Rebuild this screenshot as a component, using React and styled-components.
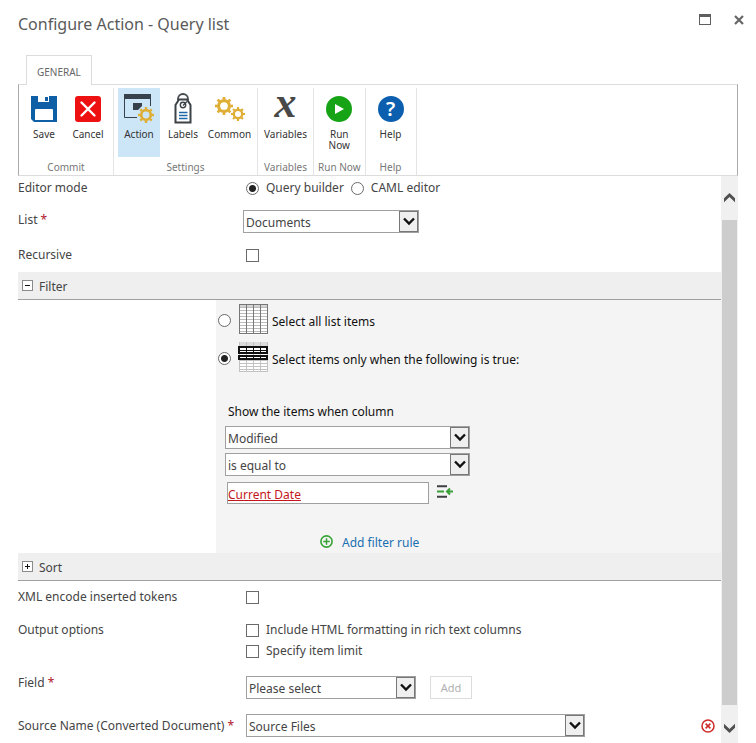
import React, { useState } from "react";
import styled, { createGlobalStyle } from "styled-components";

const App = () => {
    const [mode, setMode] = useState("builder");
    const [selection, setSelection] = useState("rule");
    const [value, setValue] = useState("Current Date");
    const [filterOpen, setFilterOpen] = useState(true);

    return (
        <>
            <GlobalStyle />
            <Dialog>
                <Header>
                    <h1>Configure Action - Query list</h1>
                    <WindowButtons>
                        <IconButton aria-label="Maximize">
                            <svg width="12" height="11" viewBox="0 0 12 11">
                                <rect x="0.5" y="0.5" width="11" height="10" fill="#fff" stroke="#5e5e5e" />
                                <rect width="12" height="3" fill="#5e5e5e" />
                            </svg>
                        </IconButton>
                        <IconButton aria-label="Close">
                            <svg width="10" height="10" viewBox="0 0 10 10">
                                <path d="M1 1L9 9M9 1L1 9" stroke="#666" strokeWidth="2.2" />
                            </svg>
                        </IconButton>
                    </WindowButtons>
                </Header>
                <Tabs>
                    <Tab>GENERAL</Tab>
                </Tabs>
                <Ribbon>
                    <Group>
                        <Tools>
                            <Tool><SaveIcon />Save</Tool>
                            <Tool><CancelIcon />Cancel</Tool>
                        </Tools>
                        <GroupName>Commit</GroupName>
                    </Group>
                    <Group>
                        <Tools>
                            <Tool $active><ActionIcon />Action</Tool>
                            <Tool><LabelsIcon />Labels</Tool>
                            <Tool $wide><CommonIcon />Common</Tool>
                        </Tools>
                        <GroupName>Settings</GroupName>
                    </Group>
                    <Group>
                        <Tools>
                            <Tool $wide><VariableMark aria-hidden="true">x</VariableMark>Variables</Tool>
                        </Tools>
                        <GroupName>Variables</GroupName>
                    </Group>
                    <Group>
                        <Tools>
                            <Tool><RunIcon /><span>Run<br />Now</span></Tool>
                        </Tools>
                        <GroupName>Run Now</GroupName>
                    </Group>
                    <Group>
                        <Tools>
                            <Tool><HelpMark aria-hidden="true">?</HelpMark>Help</Tool>
                        </Tools>
                        <GroupName>Help</GroupName>
                    </Group>
                </Ribbon>
                <Body>
                    <Form onSubmit={(e) => e.preventDefault()}>
                        <Row $top="2px" $height="30px">
                            <Label as="span">Editor mode</Label>
                            <Controls $indent>
                                <Choice>
                                    <Radio name="mode" checked={mode === "builder"} onChange={() => setMode("builder")} />
                                    Query builder
                                </Choice>
                                <Choice>
                                    <Radio name="mode" checked={mode === "caml"} onChange={() => setMode("caml")} />
                                    CAML editor
                                </Choice>
                            </Controls>
                        </Row>
                        <Row $top="4px" $height="34px">
                            <Label htmlFor="list">List <Required>*</Required></Label>
                            <Controls>
                                <Dropdown id="list" width="176px" options={["Documents"]} />
                            </Controls>
                        </Row>
                        <Row $top="5px" $height="32px">
                            <Label htmlFor="recursive">Recursive</Label>
                            <Controls $indent>
                                <Choice as="span"><Checkbox id="recursive" /></Choice>
                            </Controls>
                        </Row>

                        <SectionBar>
                            <Toggle type="button" aria-label="Toggle filter" onClick={() => setFilterOpen(!filterOpen)}>
                                <ToggleSign plus={!filterOpen} />
                            </Toggle>
                            <h2>Filter</h2>
                        </SectionBar>
                        {filterOpen && (
                            <FilterPanel>
                                <FilterOption>
                                    <Radio name="selection" checked={selection === "all"} onChange={() => setSelection("all")} />
                                    <AllItemsIcon />
                                    <span>Select all list items</span>
                                </FilterOption>
                                <FilterOption>
                                    <Radio name="selection" checked={selection === "rule"} onChange={() => setSelection("rule")} />
                                    <SomeItemsIcon />
                                    <span>Select items only when the following is true:</span>
                                </FilterOption>
                                <Rule>
                                    <RuleLabel htmlFor="column">Show the items when column</RuleLabel>
                                    <Dropdown id="column" width="245px" options={["Modified"]} />
                                    <Dropdown aria-label="Operator" width="245px" options={["is equal to"]} />
                                    <ValueRow>
                                        <ValueInput aria-label="Value" value={value} onChange={(e) => setValue(e.target.value)} />
                                        <IconButton type="button" aria-label="Insert reference">
                                            <svg width="17" height="13" viewBox="0 0 17 13">
                                                <path d="M0 1.2H10M0 11.8H10" stroke="#3c4043" strokeWidth="2" />
                                                <path d="M0 6.5H7M10 6.5H16M13 3.5L10 6.5L13 9.5" stroke="#3a9f3a" strokeWidth="2" fill="none" />
                                            </svg>
                                        </IconButton>
                                    </ValueRow>
                                </Rule>
                                <AddRule href="#add-rule">
                                    <svg width="13" height="13" viewBox="0 0 13 13">
                                        <circle cx="6.5" cy="6.5" r="5.6" fill="none" stroke="#35a335" strokeWidth="1.6" />
                                        <path d="M6.5 3.2V9.8M3.2 6.5H9.8" stroke="#35a335" strokeWidth="1.5" />
                                    </svg>
                                    <span>Add filter rule</span>
                                </AddRule>
                            </FilterPanel>
                        )}
                        <SectionBar>
                            <Toggle type="button" aria-label="Toggle sort">
                                <ToggleSign plus />
                            </Toggle>
                            <h2>Sort</h2>
                        </SectionBar>

                        <Row $top="6px" $height="33px">
                            <Label htmlFor="xml">XML encode inserted tokens</Label>
                            <Controls $indent>
                                <Choice as="span"><Checkbox id="xml" /></Choice>
                            </Controls>
                        </Row>
                        <Row $top="6px" $height="53px">
                            <Label as="span">Output options</Label>
                            <Controls $indent $column>
                                <Choice><Checkbox />Include HTML formatting in rich text columns</Choice>
                                <Choice><Checkbox />Specify item limit</Choice>
                            </Controls>
                        </Row>
                        <Row $top="6px" $height="38px">
                            <Label htmlFor="field">Field <Required>*</Required></Label>
                            <Controls $indent $low>
                                <Dropdown id="field" width="170px" options={["Please select"]} />
                                <AddButton type="button" disabled>Add</AddButton>
                            </Controls>
                        </Row>
                        <Row $top="9px" $height="32px" $center>
                            <Label htmlFor="source">Source Name (Converted Document) <Required>*</Required></Label>
                            <Controls $indent>
                                <Dropdown id="source" width="339px" options={["Source Files"]} />
                                <RemoveButton type="button" aria-label="Remove">
                                    <svg width="14" height="14" viewBox="0 0 14 14">
                                        <circle cx="7" cy="7" r="6" fill="none" stroke="#cf2a2a" strokeWidth="1.5" />
                                        <path d="M4.6 4.6L9.4 9.4M9.4 4.6L4.6 9.4" stroke="#cf2a2a" strokeWidth="1.5" />
                                    </svg>
                                </RemoveButton>
                            </Controls>
                        </Row>
                    </Form>
                    <Scrollbar>
                        <ScrollButton aria-label="Scroll up" $height="44px">
                            <svg width="11" height="10" viewBox="0 0 11 10">
                                <path d="M0 5.2L5.5 0L11 5.2V9.2L5.5 4L0 9.2Z" fill="#505050" />
                            </svg>
                        </ScrollButton>
                        <Thumb />
                        <ScrollButton aria-label="Scroll down" $height="38px" $low>
                            <svg width="11" height="10" viewBox="0 0 11 10">
                                <path d="M0 4.8L5.5 10L11 4.8V0.8L5.5 6L0 0.8Z" fill="#505050" />
                            </svg>
                        </ScrollButton>
                    </Scrollbar>
                </Body>
            </Dialog>
        </>
    );
};

const Radio = (props) => <RadioInput type="radio" {...props} />;
const Checkbox = (props) => <CheckInput type="checkbox" {...props} />;

const Dropdown = ({ width, options, ...rest }) => (
    <SelectWrap $width={width}>
        <Select {...rest}>
            {options.map((option) => (
                <option key={option}>{option}</option>
            ))}
        </Select>
        <SelectArrow>
            <svg width="12" height="9" viewBox="0 0 12 9">
                <path d="M1 1.5L6 6.5L11 1.5" fill="none" stroke="#111" strokeWidth="2.4" />
            </svg>
        </SelectArrow>
    </SelectWrap>
);

const ToggleSign = ({ plus }) => (
    <svg width="11" height="11" viewBox="0 0 11 11">
        <rect x="0.5" y="0.5" width="10" height="10" fill="#fff" stroke="#8a8a8a" />
        <path d={plus ? "M3 5.5H8M5.5 3V8" : "M3 5.5H8"} stroke="#111" />
    </svg>
);

const Gear = ({ cx, cy, r }) => (
    <g transform={`translate(${cx} ${cy})`} fill="none" stroke="#dfae35">
        <circle r={r * 0.6} strokeWidth={r * 0.34} />
        {[0, 45, 90, 135, 180, 225, 270, 315].map((angle) => (
            <path key={angle} d={`M0 ${-r * 0.7}V${-r}`} strokeWidth={r * 0.3} transform={`rotate(${angle})`} />
        ))}
    </g>
);

const SaveIcon = () => (
    <svg width="32" height="32" viewBox="0 -1 32 32">
        <path d="M3 2H29V28H6L3 25Z" fill="#0f5fa6" />
        <path d="M10 2H21V8H10ZM8 15H24Q25 15 25 16V26H7V16Q7 15 8 15Z" fill="#fff" />
        <rect x="17" y="3" width="3" height="4" fill="#0f5fa6" />
    </svg>
);

const CancelIcon = () => (
    <svg width="32" height="32" viewBox="0 -1 32 32">
        <rect x="3" y="2" width="26" height="26" rx="3" fill="#ee1111" />
        <path d="M9.5 8.5L22.5 21.5M22.5 8.5L9.5 21.5" stroke="#fff" strokeWidth="2.4" strokeLinecap="round" />
    </svg>
);

const ActionIcon = () => (
    <svg width="32" height="32" viewBox="0 0 32 32">
        <path d="M1.5 2V24.5H14M27.5 2V13" fill="none" stroke="#36414b" />
        <rect x="1" y="1" width="27" height="5" fill="#36414b" />
        <path d="M10 10H19V13L15 17H10Z" fill="#36414b" />
        <Gear cx={23} cy={22} r={8} />
    </svg>
);

const LabelsIcon = () => (
    <svg width="32" height="32" viewBox="0 0 32 32">
        <path d="M11 7.5V6A5 5 0 0 1 21 6V7.5" fill="none" stroke="#454a4e" strokeWidth="1.8" />
        <path d="M8.5 12L12 6.5H20L23.5 12V29.5H8.5Z" fill="#fff" stroke="#3d4246" strokeWidth="2" />
        <circle cx="16" cy="12" r="2.7" fill="none" stroke="#3d4246" strokeWidth="1.4" />
        <path d="M16 12.5L20 8.5" stroke="#3d4246" strokeWidth="1.2" />
        <path d="M12 19.5H20.5M12 22.5H20.5M12 25.5H20.5" stroke="#1c67a5" strokeWidth="1.3" />
    </svg>
);

const CommonIcon = () => (
    <svg width="32" height="32" viewBox="0 0 32 32">
        <Gear cx={10} cy={13} r={9} />
        <Gear cx={24} cy={21} r={7} />
    </svg>
);

const RunIcon = () => (
    <svg width="32" height="32" viewBox="0 0 32 32">
        <circle cx="16" cy="16" r="13" fill="#16a416" />
        <path d="M12 11L21 16L12 21Z" fill="#fff" />
    </svg>
);

const AllItemsIcon = () => (
    <svg width="30" height="32" viewBox="0 0 30 32">
        <rect x="1.5" y="1.5" width="28" height="30" fill="#fff" />
        <rect x="1" y="1" width="29" height="3" fill="#d4d4d4" />
        <path d="M1 4.5H30M1 7.5H30M1 10.5H30M1 13.5H30M1 16.5H30M1 19.5H30M1 22.5H30M1 25.5H30M1 28.5H30" stroke="#bbb" />
        <path d="M8.5 1V31M15.5 1V31M22.5 1V31" stroke="#777" />
        <rect x="1.5" y="1.5" width="28" height="29" fill="none" stroke="#777" />
    </svg>
);

const SomeItemsIcon = () => (
    <svg width="30" height="32" viewBox="0 0 30 32">
        <rect x="1" y="1" width="29" height="30" fill="#fff" />
        <rect x="1" y="1" width="29" height="4" fill="#dcdcdc" />
        <path d="M1 19.5H30M1 22.5H30M1 25.5H30M1 28.5H30M1 30.5H30M1.5 1V31M8.5 1V31M15.5 1V31M22.5 1V31M29.5 1V31" stroke="#c2c2c2" />
        <path d="M1 6H29V12H1ZM1 15H29V18H1Z" fill="#fff" stroke="#111" strokeWidth="2" />
        <path d="M1 9.5H29M8.5 6V12M15.5 6V12M22.5 6V12M8.5 15V18M15.5 15V18M22.5 15V18" stroke="#111" />
    </svg>
);

const GlobalStyle = createGlobalStyle`
    * {
        box-sizing: border-box;
    }
    body {
        margin: 0;
        background: #fff;
        color: #444;
        font-family: "Noto Sans", "Open Sans", sans-serif;
        font-size: 12px;
        line-height: 18px;
    }
    button, input, select {
        font: inherit;
        color: inherit;
    }
`;

const Dialog = styled.main`
    padding: 0 18px;
`;

const Header = styled.header`
    display: flex;
    justify-content: space-between;
    align-items: flex-start;
    height: 55px;
    padding-top: 12px;
    margin-right: -6px;
    h1 {
        margin: 0;
        font-size: 16px;
        line-height: 24px;
        font-weight: 400;
        color: #5a5a5a;
    }
`;

const WindowButtons = styled.div`
    display: flex;
    align-items: center;
    gap: 23px;
    height: 15px;
`;

const IconButton = styled.button`
    display: flex;
    padding: 0;
    border: 0;
    background: none;
    cursor: pointer;
`;

const Tabs = styled.nav`
    display: flex;
    padding-left: 8px;
`;

const Tab = styled.button`
    height: 30px;
    margin-bottom: -1px;
    padding: 2px 10px 0;
    border: 1px solid #dcdcdc;
    border-bottom: 0;
    background: #fff;
    color: #666;
    font-size: 10px;
    z-index: 1;
`;

const Ribbon = styled.section`
    display: flex;
    height: 92px;
    padding-top: 3px;
    border: 1px solid #dcdcdc;
    border-left-color: #aaa;
    border-right-color: #aaa;
`;

const Group = styled.div`
    display: flex;
    flex-direction: column;
    justify-content: space-between;
    padding: 0 4px;
    border-right: 1px solid #e4e4e4;
`;

const Tools = styled.div`
    display: flex;
    justify-content: center;
    gap: 2px;
`;

const Tool = styled.button`
    display: flex;
    flex-direction: column;
    align-items: center;
    width: ${(props) => (props.$wide ? "47px" : "42px")};
    height: 69px;
    padding: 5px 0 0;
    border: 0;
    background: ${(props) => (props.$active ? "#cde6f7" : "none")};
    color: #333;
    font-size: 10px;
    line-height: 11px;
    cursor: pointer;
    svg {
        flex: none;
        margin-bottom: 4px;
    }
`;

const GroupName = styled.div`
    color: #777;
    font-size: 10px;
    line-height: 16px;
    text-align: center;
    white-space: nowrap;
`;

const VariableMark = styled.span`
    height: 32px;
    margin-bottom: 4px;
    color: #484848;
    font-family: "Liberation Serif", serif;
    font-size: 44px;
    font-style: italic;
    font-weight: 700;
    line-height: 20px;
`;

const HelpMark = styled.span`
    width: 26px;
    height: 26px;
    margin: 3px 0 7px;
    border-radius: 50%;
    background: #0c5fae;
    color: #fff;
    font-size: 20px;
    font-weight: 600;
    line-height: 26px;
`;

const Body = styled.div`
    display: flex;
`;

const Form = styled.form`
    flex: 1;
    min-width: 0;
    padding-bottom: 6px;
`;

const Row = styled.div`
    display: grid;
    grid-template-columns: 225px 1fr;
    align-items: ${(props) => (props.$center ? "center" : "start")};
    min-height: ${(props) => props.$height};
    padding-top: ${(props) => props.$top};
`;

const Label = styled.label`
    padding-top: 1px;
    white-space: nowrap;
`;

const Required = styled.span`
    color: #b0182c;
`;

const Controls = styled.div`
    display: flex;
    flex-direction: ${(props) => (props.$column ? "column" : "row")};
    align-items: ${(props) => (props.$column ? "flex-start" : "center")};
    gap: ${(props) => (props.$column ? "1px" : "7px")};
    padding-left: ${(props) => (props.$indent ? "3px" : "0")};
    padding-top: ${(props) => (props.$low ? "3px" : "0")};
`;

const Choice = styled.label`
    display: flex;
    align-items: center;
    gap: 7px;
    height: 20px;
`;

const RadioInput = styled.input`
    appearance: none;
    flex: none;
    width: 13px;
    height: 13px;
    margin: 0;
    border: 1px solid #6a6a6a;
    border-radius: 50%;
    background: #fff;
    &:checked {
        background: radial-gradient(circle, #222 3px, #fff 4px);
    }
`;

const CheckInput = styled.input`
    appearance: none;
    flex: none;
    width: 13px;
    height: 13px;
    margin: 0;
    border: 1px solid #6a6a6a;
    background: #fff;
    &:checked {
        background: #444;
        box-shadow: inset 0 0 0 2px #fff;
    }
`;

const SelectWrap = styled.div`
    position: relative;
    width: ${(props) => props.$width};
    height: 23px;
`;

const Select = styled.select`
    appearance: none;
    display: block;
    width: 100%;
    height: 100%;
    padding: 2px 20px 0 2px;
    border: 1px solid #a0a0a0;
    border-radius: 0;
    background: #fff;
`;

const SelectArrow = styled.span`
    position: absolute;
    top: 1px;
    right: 1px;
    bottom: 1px;
    display: flex;
    align-items: center;
    justify-content: center;
    width: 19px;
    border: 1px solid #777;
    background: #efefef;
    pointer-events: none;
`;

const SectionBar = styled.div`
    display: flex;
    align-items: center;
    gap: 6px;
    height: 28px;
    padding-left: 4px;
    border-bottom: 1px solid #a0a0a0;
    background: #efefef;
    h2 {
        margin: 0;
        padding-top: 2px;
        font-size: 12px;
        font-weight: 400;
    }
`;

const Toggle = styled(IconButton)``;

const FilterPanel = styled.div`
    display: flex;
    flex-direction: column;
    align-items: flex-start;
    min-height: 253px;
    margin-left: 198px;
    padding: 3px 2px 0;
    background: #f4f4f4;
    color: #111;
`;

const FilterOption = styled.label`
    display: flex;
    align-items: center;
    height: 32px;
    margin-bottom: 6px;
    input {
        margin-top: 3px;
    }
    svg {
        margin: 0 4px 0 7px;
    }
    span {
        padding-top: 6px;
    }
`;

const Rule = styled.div`
    display: flex;
    flex-direction: column;
    gap: 4px;
    padding: 24px 0 0 7px;
    color: #444;
`;

const RuleLabel = styled.label`
    padding: 0 0 1px 3px;
    color: #111;
`;

const ValueRow = styled.div`
    display: flex;
    gap: 8px;
    padding: 2px 0 0 2px;
    button {
        padding-top: 3px;
        align-self: flex-start;
    }
`;

const ValueInput = styled.input`
    width: 202px;
    height: 22px;
    padding: 2px 0 0;
    border: 1px solid #a0a0a0;
    background: #fff;
    color: #c4161c;
    text-decoration: underline;
`;

const AddRule = styled.a`
    display: flex;
    align-items: center;
    gap: 9px;
    margin: 27px 0 0 102px;
    color: #1a6fb0;
    text-decoration: none;
    span {
        padding-top: 3px;
    }
`;

const AddButton = styled.button`
    width: 42px;
    height: 23px;
    margin-left: 7px;
    padding: 0;
    border: 1px solid #dcdcdc;
    background: #fff;
    color: #b0b0b0;
    font-size: 11px;
`;

const RemoveButton = styled(IconButton)`
    margin: 0 6px 0 auto;
`;

const Scrollbar = styled.div`
    display: flex;
    flex-direction: column;
    flex: none;
    width: 17px;
    background: #f0f0f0;
`;

const ScrollButton = styled.button`
    display: flex;
    align-items: center;
    justify-content: center;
    height: ${(props) => props.$height};
    padding: ${(props) => (props.$low ? "8px 0 0" : "0")};
    border: 0;
    background: none;
`;

const Thumb = styled.div`
    flex: 1;
    margin: 0 1px;
    background: #cdcdcd;
`;

export default App;
